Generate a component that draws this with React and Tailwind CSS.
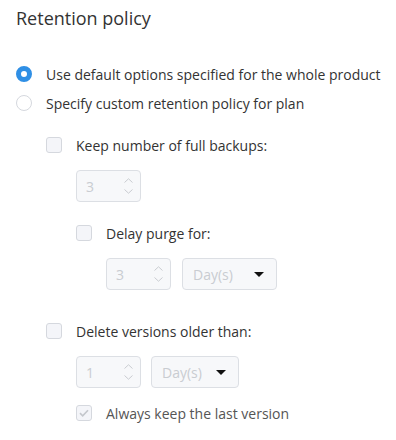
import React from 'react'

const font = { fontFamily: '"Open Sans", "Liberation Sans", sans-serif' }

function Radio({ checked, label }) {
  return (
    <div className="flex items-center h-5">
      {checked ? (
        <span className="w-4 h-4 rounded-full border-[5px] border-[#2f8fe5] bg-white shrink-0" />
      ) : (
        <span className="w-4 h-4 rounded-full border border-[#d5d8de] bg-white shrink-0" />
      )}
      <span className="ml-[14px] text-[14px] text-[#333]">{label}</span>
    </div>
  )
}

function Checkbox({ label, checked, disabled }) {
  return (
    <div className="flex items-center h-5">
      <span className="w-4 h-4 rounded-[3px] border border-[#d5d8de] bg-[#f4f5f9] shrink-0 flex items-center justify-center">
        {checked && (
          <svg width="10" height="8" viewBox="0 0 10 8" fill="none">
            <path d="M1 4.2L3.7 6.8L9 1.2" stroke="#c4c7cc" strokeWidth="1.6" />
          </svg>
        )}
      </span>
      <span className={`ml-[14px] text-[14px] ${disabled ? 'text-[#555]' : 'text-[#333]'}`}>{label}</span>
    </div>
  )
}

function Spin({ value }) {
  return (
    <div className="w-[65px] h-[32px] rounded-[4px] border border-[#dcdfe4] bg-[#f7f8fa] flex items-center justify-between pl-[9px] pr-[7px]">
      <span className="text-[14px] text-[#c9ccd1]">{value}</span>
      <div className="flex flex-col gap-[6px]">
        <svg width="9" height="5" viewBox="0 0 9 5" fill="none">
          <path d="M0.5 4.5L4.5 0.8L8.5 4.5" stroke="#c9ccd1" strokeWidth="1" />
        </svg>
        <svg width="9" height="5" viewBox="0 0 9 5" fill="none">
          <path d="M0.5 0.5L4.5 4.2L8.5 0.5" stroke="#c9ccd1" strokeWidth="1" />
        </svg>
      </div>
    </div>
  )
}

function Select({ width }) {
  return (
    <div className={`${width} h-[32px] rounded-[4px] border border-[#dcdfe4] bg-[#f7f8fa] flex items-center justify-between pl-[10px] pr-[12px]`}>
      <span className="text-[14px] text-[#c9ccd1]">Day(s)</span>
      <svg width="10" height="5" viewBox="0 0 10 5">
        <path d="M0 0H10L5 5Z" fill="#111" />
      </svg>
    </div>
  )
}

export default function App() {
  return (
    <div className="w-[396px] h-[440px] bg-white pl-4 pt-[6px]" style={font}>
      <h2 className="text-[18px] leading-6 text-[#333]">Retention policy</h2>

      <div className="mt-[34px]">
        <Radio checked label="Use default options specified for the whole product" />
      </div>
      <div className="mt-[9px]">
        <Radio label="Specify custom retention policy for plan" />
      </div>

      <div className="pl-[30px]">
        <div className="mt-[22px]">
          <Checkbox label="Keep number of full backups:" />
        </div>
        <div className="pl-[30px]">
          <div className="mt-[15px]">
            <Spin value="3" />
          </div>
          <div className="mt-[21px]">
            <Checkbox label="Delay purge for:" />
          </div>
          <div className="pl-[30px] mt-[15px] flex gap-[11px]">
            <Spin value="3" />
            <Select width="w-[95px]" />
          </div>
        </div>

        <div className="mt-[31px]">
          <Checkbox label="Delete versions older than:" />
        </div>
        <div className="pl-[30px]">
          <div className="mt-[15px] flex gap-[10px]">
            <Spin value="1" />
            <Select width="w-[88px]" />
          </div>
          <div className="mt-[15px]">
            <Checkbox checked disabled label="Always keep the last version" />
          </div>
        </div>
      </div>
    </div>
  )
}
